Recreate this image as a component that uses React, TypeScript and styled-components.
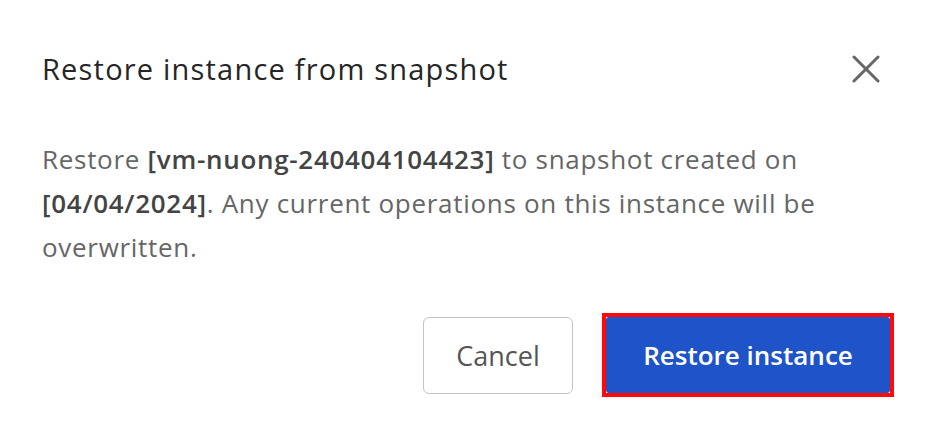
import React from "react";
import styled, { createGlobalStyle } from "styled-components";

const Global = createGlobalStyle`
  html, body { margin: 0; padding: 0; background: #ffffff; }
  body { font-family: "Open Sans", "Noto Sans", sans-serif; }
  * { box-sizing: border-box; }
`;

const Dialog = styled.div`
  width: 940px;
  height: 433px;
  background: #ffffff;
  padding: 46px 46px 0 42px;
  display: flex;
  flex-direction: column;
`;

const Header = styled.div`
  display: flex;
  align-items: center;
  justify-content: space-between;
  height: 46px;
`;

const Title = styled.h2`
  margin: 0;
  font-size: 29px;
  letter-spacing: 1.2px;
  font-weight: 400;
  color: #262626;
  line-height: 46px;
`;

const CloseButton = styled.button`
  border: none;
  background: transparent;
  padding: 0;
  width: 40px;
  height: 40px;
  display: flex;
  align-items: center;
  justify-content: center;
  margin-right: 8px;
  cursor: pointer;
`;

const Body = styled.p`
  margin: 45px 0 0 0;
  font-size: 26px;
  letter-spacing: 0.7px;
  line-height: 44px;
  color: #666666;
  max-width: 820px;
`;

const Strong = styled.strong`
  font-weight: 600;
  color: #444444;
`;

const Footer = styled.div`
  display: flex;
  justify-content: flex-end;
  align-items: center;
  gap: 29px;
  margin-top: 44px;
`;

const CancelButton = styled.button`
  width: 150px;
  height: 77px;
  border: 1px solid #c4c4c4;
  border-radius: 6px;
  background: #ffffff;
  font-family: inherit;
  font-size: 27px;
  color: #555555;
  cursor: pointer;
`;

const FocusRing = styled.span`
  display: inline-flex;
  border: 4px solid #ff0a0a;
`;

const PrimaryButton = styled.button`
  width: 284px;
  height: 76px;
  border: none;
  border-radius: 3px;
  background: #1f54c9;
  color: #ffffff;
  font-family: inherit;
  font-size: 26px;
  font-weight: 600;
  cursor: pointer;
`;

export default function App() {
  return (
    <>
      <Global />
      <Dialog>
        <Header>
          <Title>Restore instance from snapshot</Title>
          <CloseButton aria-label="Close">
            <svg width="28" height="28" viewBox="0 0 28 28">
              <path d="M2 2 L26 26 M26 2 L2 26" stroke="#666666" strokeWidth="3" strokeLinecap="round" />
            </svg>
          </CloseButton>
        </Header>
        <Body>
          Restore <Strong>[vm-nuong-240404104423]</Strong> to snapshot created on{" "}
          <Strong>[04/04/2024]</Strong>. Any current operations on this instance will be overwritten.
        </Body>
        <Footer>
          <CancelButton>Cancel</CancelButton>
          <FocusRing>
            <PrimaryButton>Restore instance</PrimaryButton>
          </FocusRing>
        </Footer>
      </Dialog>
    </>
  );
}
